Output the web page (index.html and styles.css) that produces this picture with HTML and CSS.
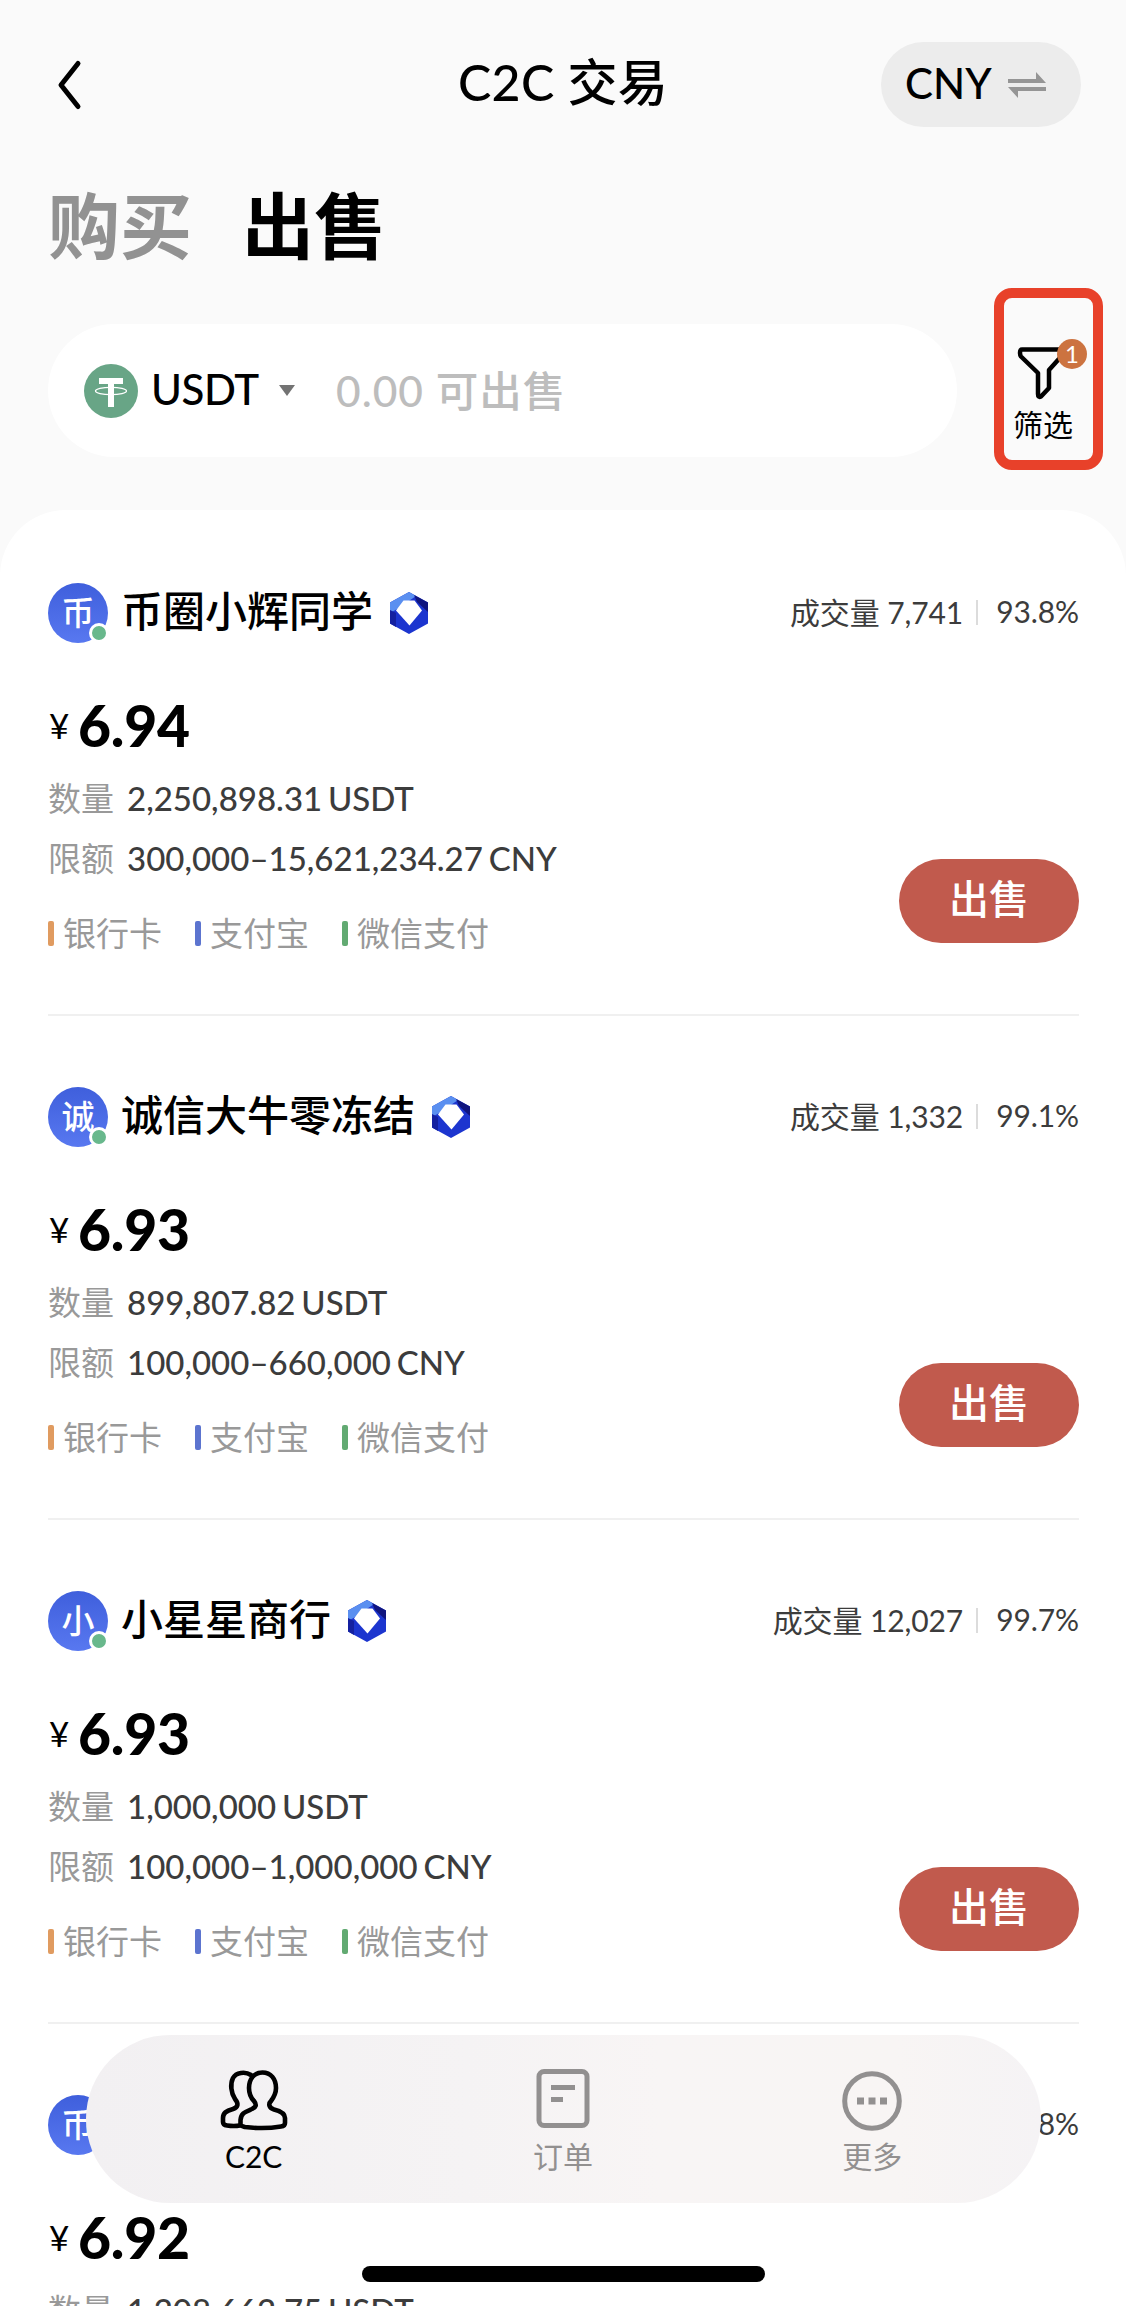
FILE: index.html
```html
<!DOCTYPE html>
<html lang="zh-CN">
<head>
<meta charset="utf-8">
<title>C2C 交易</title>
<link rel="stylesheet" href="styles.css">
</head>
<body>
<svg class="defs" width="0" height="0">
  <defs>
    <symbol id="verified" viewBox="0 0 40 42">
      <path d="M20 0L39 10.5V31.5L20 42L1 31.5V10.5Z" fill="#1c35cf"/>
      <path d="M20 0L1 10.5V21L10 16L27 4Z" fill="#5a8ff0"/>
      <path d="M25 3L39 10.5V20L28 10Z" fill="#10157e"/>
      <path d="M1 18L7 21V35L1 31.500Z" fill="#1420a0"/>
      <path d="M14.500 8.500H25.500L33 18.500L20.500 33.500L7 18.500Z" fill="#fff"/>
    </symbol>
  </defs>
</svg>
<div class="screen">
  <header class="topbar">
    <svg class="back" viewBox="0 0 24 48"><path d="M21 2.500L4 24L21 45.500" fill="none" stroke="#000" stroke-width="5" stroke-linecap="round" stroke-linejoin="round"/></svg>
    <h1 class="title">C2C 交易</h1>
    <div class="currency">
      <span class="currency-code">CNY</span>
      <svg class="swap" viewBox="0 0 38 28"><path d="M0 8H28V1L38 12H0ZM38 16H0L10 27V20H38Z" fill="#959595"/></svg>
    </div>
  </header>
  <nav class="modes"><span class="mode">购买</span><span class="mode mode-on">出售</span></nav>
  <div class="filter-row">
    <div class="amount">
      <svg class="tether" viewBox="0 0 54 54"><circle cx="27" cy="27" r="27" fill="#68a586"/><path d="M15 14H39V20H30V43H24V20H15Z" fill="#fff"/><ellipse cx="27" cy="27" rx="15.500" ry="3.600" fill="none" stroke="#fff" stroke-width="1.300"/></svg>
      <span class="coin">USDT</span>
      <svg class="caret" viewBox="0 0 16 11"><path d="M0 0H16L8 11Z" fill="#737373"/></svg>
      <span class="hint">0.00 可出售</span>
    </div>
    <div class="filter">
      <div class="filter-icon">
        <svg class="funnel" viewBox="0 0 50 54"><path d="M5 3.500H42Q45 3.500 45 7V9.500L32 24V42L24 50.500Q21 52 21 48V27L4 10.500Q3 9 3 7Q3 3.500 5 3.500Z" fill="none" stroke="#000" stroke-width="4.500" stroke-linejoin="round"/></svg>
        <span class="badge">1</span>
      </div>
      <span class="filter-label">筛选</span>
    </div>
  </div>
  <main class="offers">
    <article class="offer">
      <div class="seller"><div class="avatar">币<i class="online"></i></div><h2 class="name">币圈小辉同学</h2><svg class="verified"><use href="#verified"/></svg>
        <div class="stats"><span>成交量 <b class="num">7,741</b></span><i class="sep"></i><span class="num">93.8%</span></div></div>
      <div class="price"><span class="yen">¥</span><span class="value">6.94</span></div>
      <div class="body">
        <dl class="facts"><dt>数量</dt><dd>2,250,898.31 USDT</dd><dt>限额</dt><dd>300,000–15,621,234.27 CNY</dd></dl>
        <div class="pays"><span class="pay bank">银行卡</span><span class="pay ali">支付宝</span><span class="pay wechat">微信支付</span></div>
        <button class="sell">出售</button>
      </div>
    </article>
    <article class="offer">
      <div class="seller"><div class="avatar">诚<i class="online"></i></div><h2 class="name">诚信大牛零冻结</h2><svg class="verified"><use href="#verified"/></svg>
        <div class="stats"><span>成交量 <b class="num">1,332</b></span><i class="sep"></i><span class="num">99.1%</span></div></div>
      <div class="price"><span class="yen">¥</span><span class="value">6.93</span></div>
      <div class="body">
        <dl class="facts"><dt>数量</dt><dd>899,807.82 USDT</dd><dt>限额</dt><dd>100,000–660,000 CNY</dd></dl>
        <div class="pays"><span class="pay bank">银行卡</span><span class="pay ali">支付宝</span><span class="pay wechat">微信支付</span></div>
        <button class="sell">出售</button>
      </div>
    </article>
    <article class="offer">
      <div class="seller"><div class="avatar">小<i class="online"></i></div><h2 class="name">小星星商行</h2><svg class="verified"><use href="#verified"/></svg>
        <div class="stats"><span>成交量 <b class="num">12,027</b></span><i class="sep"></i><span class="num">99.7%</span></div></div>
      <div class="price"><span class="yen">¥</span><span class="value">6.93</span></div>
      <div class="body">
        <dl class="facts"><dt>数量</dt><dd>1,000,000 USDT</dd><dt>限额</dt><dd>100,000–1,000,000 CNY</dd></dl>
        <div class="pays"><span class="pay bank">银行卡</span><span class="pay ali">支付宝</span><span class="pay wechat">微信支付</span></div>
        <button class="sell">出售</button>
      </div>
    </article>
    <article class="offer">
      <div class="seller"><div class="avatar">币</div>
        <div class="stats"><span class="num">8%</span></div></div>
      <div class="price"><span class="yen">¥</span><span class="value">6.92</span></div>
      <div class="body">
        <dl class="facts"><dt>数量</dt><dd>1,208,662.75 USDT</dd></dl>
      </div>
    </article>
  </main>
  <nav class="tabbar">
    <div class="tab tab-on">
      <svg class="tab-icon" viewBox="0 0 68 60"><g fill="none" stroke="#000" stroke-width="4.600" stroke-linejoin="round" stroke-linecap="round"><path d="M31 5C25 1 16 2.500 13 8C10 14 11 23 15 29C19 34 18 37 13 39C6 41 3 43 3 48V52Q3 55 7 55.500Q14 56.500 20 55.500"/><path d="M42.500 2.500C34 2.500 29 9 29 18C29 24 31 28 34 31C37 35 36 37 32 39C25 42 21 43 20.500 50V54C20.500 56 23 56.500 25 57C37 58.500 49 58.500 61 56.500Q65 56 65 53V48C65 43 60 41 54 39.500C49 38 48 34 51 31C54 27 56 23 56 18C56 9 51 2.500 42.500 2.500Z"/></g></svg>
      <span class="tab-label">C2C</span>
    </div>
    <div class="tab">
      <svg class="tab-icon" viewBox="0 0 68 60"><rect x="10" y="1.500" width="48" height="54" rx="5" fill="none" stroke="#929090" stroke-width="5"/><path d="M22 17.500H46M22 29.500H34" stroke="#929090" stroke-width="5"/></svg>
      <span class="tab-label">订单</span>
    </div>
    <div class="tab">
      <svg class="tab-icon" viewBox="0 0 68 60"><circle cx="34" cy="31" r="27.300" fill="none" stroke="#929090" stroke-width="5"/><path d="M19 27.500h7v7h-7zM30.500 27.500h7v7h-7zM42 27.500h7v7h-7z" fill="#929090"/></svg>
      <span class="tab-label">更多</span>
    </div>
  </nav>
  <div class="home-bar"></div>
</div>
</body>
</html>
```
FILE: styles.css
```css
* { box-sizing: border-box; margin: 0; padding: 0; }
body {
  width: 1126px; height: 2306px; overflow: hidden;
  background: #fafafa; color: #000;
  font-family: Lato, "Noto Sans CJK SC", sans-serif;
}
.defs { position: absolute; }
svg { display: block; flex: none; overflow: visible; }
i { font-style: normal; }
.screen { position: relative; height: 2306px; overflow: hidden; }

.topbar { display: grid; grid-template-columns: 200px 1fr 200px; align-items: center; height: 85px; margin-top: 42px; padding: 0 45px 0 48px; }
.back { width: 24px; height: 48px; margin-left: 9px; }
.title { padding: 0 3px 6px 0; font-size: 50px; line-height: 72px; font-weight: 500; letter-spacing: 0.3px; text-align: center; white-space: nowrap; }
.currency { display: flex; align-items: center; width: 200px; height: 85px; padding-left: 24px; border-radius: 43px; background: #ececec; }
.currency-code { width: 103px; padding-bottom: 3px; font-size: 42px; font-weight: 500; }
.swap { width: 38px; height: 28px; }

.modes { display: flex; gap: 50px; height: 104px; margin: 46px 0 0 48px; font-size: 72px; line-height: 104px; font-weight: 700; }
.mode { color: #929292; }
.mode-on { color: #000; }

.filter-row { display: flex; align-items: flex-start; height: 222px; margin-top: 11px; padding-left: 48px; }
.amount { display: flex; align-items: center; width: 909px; height: 133px; margin-top: 36px; padding-left: 36px; border-radius: 67px; background: #fff; }
.tether { width: 54px; height: 54px; }
.coin { width: 128px; margin-left: 13px; padding-bottom: 3px; font-size: 42px; font-weight: 500; letter-spacing: -0.4px; }
.caret { width: 16px; height: 11px; }
.hint { margin-left: 41px; padding-bottom: 5px; font-size: 42.5px; font-weight: 500; letter-spacing: 1px; color: #bdbdbd; white-space: nowrap; }
.filter { width: 109px; height: 182px; margin-left: 37px; padding: 48px 0 0 9px; border: 10px solid #e8412a; border-radius: 18px; }
.filter-icon { position: relative; height: 54px; padding-left: 4px; }
.funnel { width: 50px; height: 54px; }
.badge { position: absolute; left: 44px; top: -7px; width: 30px; height: 30px; border-radius: 50%; background: #cc7340; color: #fff; font-size: 24px; line-height: 29px; text-align: center; }
.filter-label { display: block; margin-top: 2px; font-size: 30px; line-height: 44px; white-space: nowrap; }

.offers { height: 1796px; padding: 0 47px 0 48px; border-radius: 66px 66px 0 0; background: #fff; }
.offer { height: 504px; padding-top: 73px; }
.offer + .offer { padding-top: 71px; border-top: 2px solid #f0f0f0; }
.seller { display: flex; align-items: center; height: 60px; }
.avatar { position: relative; width: 60px; height: 60px; border-radius: 50%; background: linear-gradient(#3f5fdc, #5878f0); color: #fff; font-size: 33px; line-height: 58px; font-weight: 500; text-align: center; }
.online { position: absolute; left: 41px; top: 40px; width: 20px; height: 20px; border: 3.500px solid #fff; border-radius: 50%; background: #68b88c; }
.name { margin-left: 13px; padding-bottom: 5px; font-size: 42px; line-height: 60px; font-weight: 500; }
.verified { width: 40px; height: 42px; margin-left: 16px; }
.stats { display: flex; align-items: center; margin-left: auto; padding-bottom: 4px; font-size: 30px; color: #3c3c3c; white-space: nowrap; }
.stats > span { letter-spacing: -0.1px; }
.num { font-weight: 400; }
.sep { width: 2px; height: 25px; margin: 3px 18px 0 13px; background: #dcdcdc; }
.price { display: flex; align-items: center; height: 70px; margin-top: 46px; }
.yen { width: 30px; padding: 2px 0 0 1px; font-size: 35px; }
.value { padding-top: 1px; font-size: 57px; font-weight: 900; letter-spacing: -0.2px; }
.body { position: relative; margin-top: 9px; }
.facts { display: grid; grid-template-columns: 79px 1fr; grid-auto-rows: 60px; font-size: 33px; line-height: 60px; white-space: nowrap; }
.facts dt { color: #999; }
.facts dd { color: #3c3c3c; font-weight: 500; word-spacing: -2.5px; }
.pays { display: flex; gap: 33px; height: 60px; margin-top: 15px; align-items: center; font-size: 33px; line-height: 60px; color: #999; }
.pay { display: flex; align-items: center; gap: 9px; }
.pay::before { content: ""; width: 6px; height: 25px; border-radius: 2px; background: var(--mark); }
.bank { --mark: #e09b60; }
.ali { --mark: #5c74cf; }
.wechat { --mark: #62aa72; }
.sell { position: absolute; right: 0; top: 91px; width: 180px; height: 84px; padding-bottom: 4px; border: 0; border-radius: 42px; background: #c15a4d; color: #fff; font: 500 40px/80px Lato, "Noto Sans CJK SC", sans-serif; }

.tabbar { position: absolute; left: 86px; top: 2035px; width: 955px; height: 168px; display: flex; padding: 35px 14px 0 13px; border-radius: 84px; background: linear-gradient(90deg, #f2f0f2, #f5f3f4 40%, #f8f5f5 60%, #f8f5f4 85%, #f5f3f5); }
.tab { flex: 1; display: flex; flex-direction: column; align-items: center; color: #929090; }
.tab-icon { width: 68px; height: 60px; }
.tab-label { margin-top: 4px; font-size: 30px; line-height: 44px; }
.tab-on { color: #000; }
.home-bar { position: absolute; left: 362px; top: 2266px; width: 403px; height: 16px; border-radius: 8px; background: #000; }
```
